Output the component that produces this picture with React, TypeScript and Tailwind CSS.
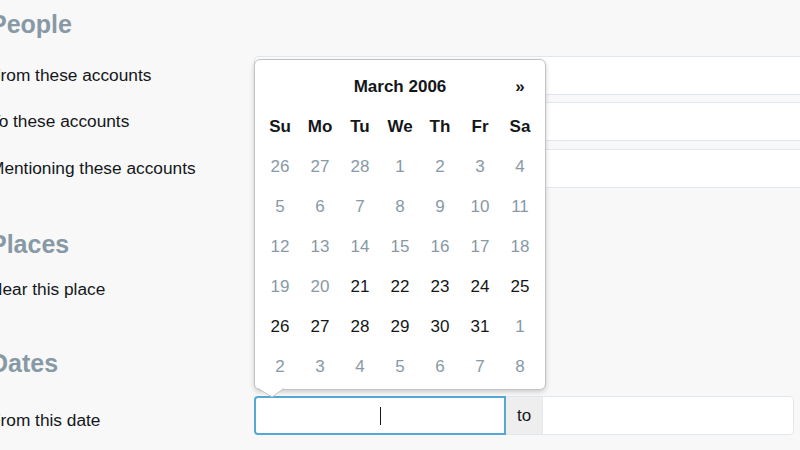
import React from "react";

const days: { d: number; active: boolean }[] = [];
[26, 27, 28].forEach((d) => days.push({ d, active: false }));
for (let d = 1; d <= 31; d++) days.push({ d, active: d >= 21 });
for (let d = 1; d <= 8; d++) days.push({ d, active: false });

const weekDays = ["Su", "Mo", "Tu", "We", "Th", "Fr", "Sa"];

function Heading({ children, className }: { children: React.ReactNode; className?: string }) {
    return (
        <h2 className={"text-[25px] leading-[30px] font-bold text-[#8899a6] " + (className ?? "")}>
            {children}
        </h2>
    );
}

function Row({ label, className, input = true }: { label: string; className?: string; input?: boolean }) {
    return (
        <div className={"flex items-center h-[39px] " + (className ?? "")}>
            <label className="w-[264px] shrink-0 text-[17.3px] text-[#14171a]">{label}</label>
            {input && (
                <div className="w-[560px] h-[39px] shrink-0 bg-white border border-[#e1e8ed] rounded-[4px]" />
            )}
        </div>
    );
}

function DatePicker() {
    return (
        <div className="absolute left-[254px] top-[59px] w-[292px] h-[331px] bg-white border border-[#c2c2c2] rounded-[6px] shadow-[0_2px_5px_rgba(0,0,0,0.18)] px-[5px] pt-[7px]">
            <div className="grid grid-cols-7 text-[17px] text-[#14171a]">
                <div className="h-[40px]" />
                <div className="col-span-5 h-[40px] flex items-center justify-center font-bold">March 2006</div>
                <div className="h-[40px] flex items-center justify-center font-bold">»</div>
                {weekDays.map((w) => (
                    <div key={w} className="h-[40px] flex items-center justify-center font-bold">
                        {w}
                    </div>
                ))}
                {days.map((x, i) => (
                    <div
                        key={i}
                        className={
                            "h-[40px] flex items-center justify-center " +
                            (x.active ? "text-[#14171a]" : "text-[#8899a6]")
                        }
                    >
                        {x.d}
                    </div>
                ))}
            </div>
            <svg className="absolute left-[3px] bottom-[-9px]" width="26" height="10" viewBox="0 0 26 10">
                <polygon points="0,0 14,9 26,0" fill="#ffffff" />
                <polyline points="0,0.5 14,9 26,0.5" fill="none" stroke="#c2c2c2" strokeWidth="1" />
            </svg>
        </div>
    );
}

export default function App() {
    return (
        <div
            className="relative w-[800px] h-[450px] overflow-hidden bg-[#f8f8f8]"
            style={{ fontFamily: '"Liberation Sans", Arial, sans-serif' }}
        >
            <div className="ml-[-10px] w-[830px] pt-[9px] flex flex-col">
                <Heading>People</Heading>
                <Row label="From these accounts" className="mt-[17px]" />
                <Row label="To these accounts" className="mt-[7px]" />
                <Row label="Mentioning these accounts" className="mt-[8px]" />

                <Heading className="mt-[41px]">Places</Heading>
                <Row label="Near this place" className="mt-[11px]" input={false} />

                <Heading className="mt-[39px]">Dates</Heading>
                <div className="flex items-center h-[39px] mt-[18px]">
                    <label className="w-[264px] shrink-0 mt-[11px] text-[17.3px] text-[#14171a]">From this date</label>
                    <div className="w-[252px] h-[39px] bg-white border-2 border-[#55a8d6] rounded-l-[4px] flex items-center justify-center">
                        <div className="w-px h-[18px] bg-[#14171a]" />
                    </div>
                    <div className="w-[36px] h-[39px] bg-[#eeeeee] border-y border-[#e1e8ed] flex items-center justify-center text-[17px] text-[#14171a]">
                        to
                    </div>
                    <div className="w-[252px] h-[39px] bg-white border border-[#e1e8ed] rounded-r-[4px]" />
                </div>
            </div>
            <DatePicker />
        </div>
    );
}
